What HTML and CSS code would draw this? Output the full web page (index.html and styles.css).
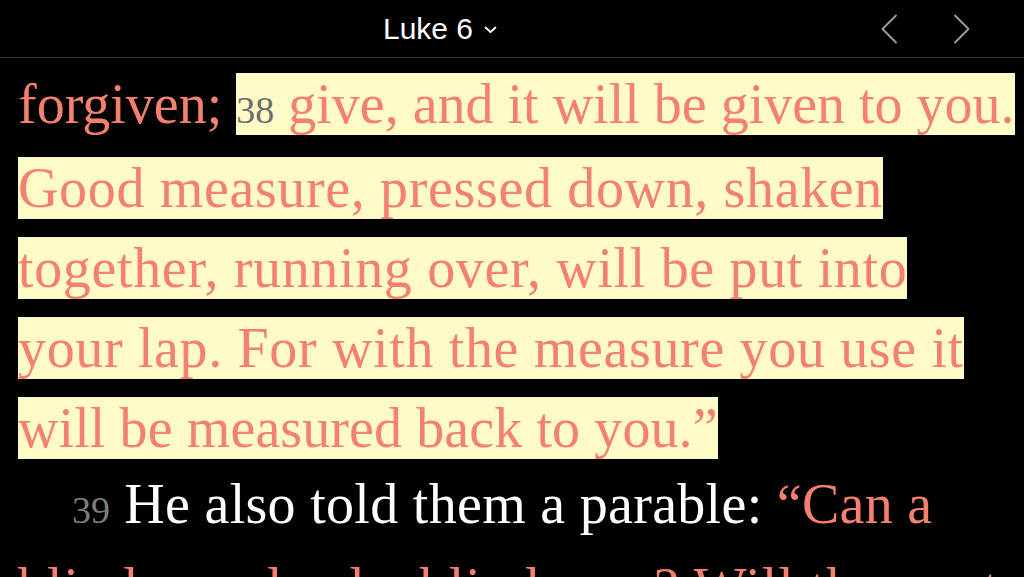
FILE: index.html
```html
<!DOCTYPE html>
<html>
<head>
<meta charset="utf-8">
<link rel="stylesheet" href="styles.css">
</head>
<body>
<header class="topbar">
  <div class="title-area">
    <button class="title">Luke 6
      <svg class="caret" width="13" height="8" viewBox="0 0 13 8"><path d="M1.5 1.5 L6.5 6 L11.5 1.5" fill="none" stroke="#fff" stroke-width="1.8" stroke-linecap="round" stroke-linejoin="round"/></svg>
    </button>
  </div>
  <nav class="pager">
    <svg class="arrow" width="18" height="30" viewBox="0 0 18 30"><path d="M16 1.5 L2.5 15 L16 28.5" fill="none" stroke="#a0a0a0" stroke-width="1.8" stroke-linecap="round" stroke-linejoin="round"/></svg>
    <svg class="arrow" width="18" height="30" viewBox="0 0 18 30"><path d="M2 1.5 L15.5 15 L2 28.5" fill="none" stroke="#a0a0a0" stroke-width="1.8" stroke-linecap="round" stroke-linejoin="round"/></svg>
  </nav>
</header>
<main class="reader">
  <p class="para">
    <span class="line verse-start"><span class="red">forgiven;</span> <span class="hl"><span class="vnum">38</span> <span class="red">give, and it will be given to you.</span></span></span>
    <span class="line wide"><span class="hl red">Good measure, pressed down, shaken</span></span>
    <span class="line wide"><span class="hl red">together, running over, will be put into</span></span>
    <span class="line wide"><span class="hl red">your lap. For with the measure you use it</span></span>
    <span class="line slight last"><span class="hl red">will be measured back to you.”</span></span>
  </p>
  <p class="para">
    <span class="line verse-start indent mid"><span class="vnum dark">39</span> <span class="white">He also told them a parable:</span> <span class="red">“Can a</span></span>
    <span class="line wider"><span class="red">blind man lead a blind man? Will they not</span></span>
  </p>
</main>
</body>
</html>
```
FILE: styles.css
```css
* { box-sizing: border-box; }
html, body { margin: 0; padding: 0; background: #000; }
body { width: 1024px; height: 577px; overflow: hidden; }

.topbar {
  height: 58px;
  display: flex;
  align-items: center;
  border-bottom: 1px solid #383838;
}
.title-area {
  flex: 1;
  display: flex;
  justify-content: center;
}
.title {
  background: none;
  border: 0;
  padding: 0;
  color: #fff;
  font-family: "Liberation Sans", Arial, sans-serif;
  font-size: 30px;
  display: flex;
  align-items: center;
  gap: 11px;
}
.caret { margin-top: 3px; }
.pager {
  width: 144px;
  display: flex;
  gap: 55px;
  align-items: center;
}

.reader {
  padding: 6px 0 0 18px;
  font-family: "Liberation Serif", "Times New Roman", serif;
  font-size: 56px;
  line-height: 80px;
  white-space: nowrap;
}
.para { margin: 0; }
.line { display: block; height: 80px; }
.line.verse-start { height: 84px; }
.line.last { height: 76px; }
.wide { letter-spacing: 0.65px; }
.wider { letter-spacing: 0.95px; }
.mid { letter-spacing: 0.3px; }
.slight { letter-spacing: 0.1px; }
.indent { padding-left: 54px; }
.red { color: #f4806f; }
.white { color: #fff; }
.hl { background: #fffbc7; }
.vnum { color: #6e6e6e; font-size: 38px; letter-spacing: 0; }
.vnum.dark { color: #7d7d7d; }
```
